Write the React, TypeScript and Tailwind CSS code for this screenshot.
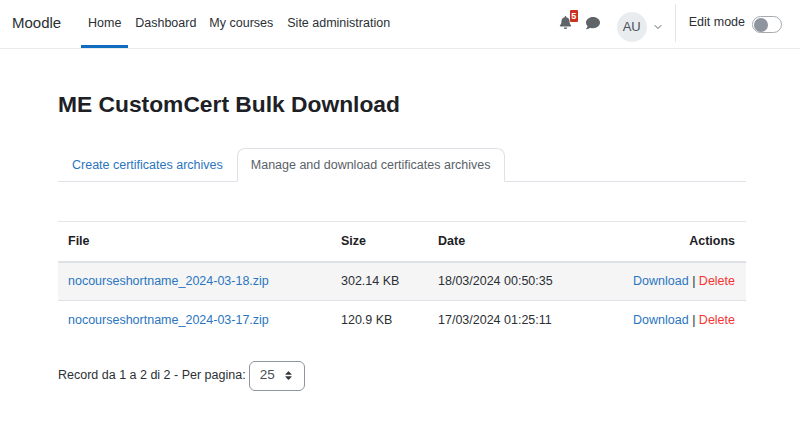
import { FaBell, FaComment, FaSort } from "react-icons/fa";
import { ChevronDown } from "lucide-react";

const rows = [
  { file: "nocourseshortname_2024-03-18.zip", size: "302.14 KB", date: "18/03/2024 00:50:35", shaded: true },
  { file: "nocourseshortname_2024-03-17.zip", size: "120.9 KB", date: "17/03/2024 01:25:11", shaded: false },
];

function Navbar() {
  return (
    <nav className="flex h-[49px] items-stretch border-b border-[#e9ebed] bg-white pl-3 pr-[18px]">
      <span className="mt-[13px] text-[15px] leading-[20px] text-[#2b3035]">Moodle</span>
      <ul className="ml-[20px] flex text-[12.5px] text-[#2b3035]">
        <li className="w-[47px] border-b-[3px] border-[#0f6cbf] pt-[14px] text-center leading-[18px]">Home</li>
        <li className="ml-[7px] pt-[14px] leading-[18px]">Dashboard</li>
        <li className="ml-[13px] pt-[14px] leading-[18px]">My courses</li>
        <li className="ml-[14px] pt-[14px] leading-[18px]">Site administration</li>
      </ul>
      <div className="ml-auto flex items-start">
        <div className="relative mt-[16px] text-[#5f6468]">
          <FaBell className="h-[13px] w-[13px]" />
          <span className="absolute left-[11px] top-[-6px] h-[12px] w-[8px] rounded-[1px] bg-[#ca3120] text-center text-[9px] font-bold leading-[12px] text-white">
            5
          </span>
        </div>
        <FaComment className="ml-[14px] mt-[16px] h-[14px] w-[14px] text-[#5f6468]" />
        <div className="ml-[17px] mt-[12px] flex h-[30px] w-[30px] items-center justify-center rounded-full bg-[#e9ecef] text-[13px] text-[#495057]">
          AU
        </div>
        <ChevronDown className="ml-[5px] mt-[21px] h-[12px] w-[12px] text-[#5f6468]" strokeWidth={2} />
        <div className="ml-[11px] mt-1 h-[38px] w-px bg-[#e3e5e7]" />
        <span className="ml-[13px] mt-[13px] text-[12.5px] leading-[18px] text-[#2b3035]">Edit mode</span>
        <div className="ml-[7px] mt-[16px] flex h-[17px] w-[30px] items-center rounded-full border border-[#a5aab1] bg-white pl-px">
          <div className="h-[14px] w-[14px] rounded-full bg-[#8f959e]" />
        </div>
      </div>
    </nav>
  );
}

export default function App() {
  return (
    <div className="h-[424px] w-[800px] overflow-hidden bg-white font-['Liberation_Sans',Arial,sans-serif] text-[#2b3035]">
      <Navbar />
      <main className="pl-[58px] pr-[54px] pt-[40px]">
        <h1 className="text-[22.8px] font-bold leading-[30px] text-[#1d2125]">ME CustomCert Bulk Download</h1>

        <div className="mt-[29px] flex h-[34px] border-b border-[#dee2e6] text-[12.5px]">
          <a className="px-[14px] pt-[7px] leading-[20px] text-[#2a75c0]">Create certificates archives</a>
          <a className="h-[34px] rounded-t-[8px] border border-b-white border-[#dee2e6] bg-white px-[13px] pt-[6px] leading-[20px] text-[#5a6168]">
            Manage and download certificates archives
          </a>
        </div>

        <table className="mt-[39px] w-[688px] table-fixed border-collapse text-[12.5px]">
          <thead>
            <tr className="h-[40px] border-t border-b-2 border-t-[#e3e5e7] border-b-[#dee2e6] font-bold text-[#1d2125]">
              <th className="w-[273px] pl-[10px] text-left">File</th>
              <th className="w-[97px] pl-[10px] text-left">Size</th>
              <th className="pl-[10px] text-left">Date</th>
              <th className="w-[170px] pr-[11px] text-right">Actions</th>
            </tr>
          </thead>
          <tbody>
            {rows.map((row) => (
              <tr key={row.file} className={row.shaded ? "h-[39px] border-b border-[#dee2e6] bg-[#f5f5f5]" : "h-[39px]"}>
                <td className="pl-[10px] text-[#2a75c0]">{row.file}</td>
                <td className="pl-[10px]">{row.size}</td>
                <td className="pl-[10px]">{row.date}</td>
                <td className="pr-[11px] text-right">
                  <a className="text-[#2a75c0]">Download</a> | <a className="text-[#f53333]">Delete</a>
                </td>
              </tr>
            ))}
          </tbody>
        </table>

        <div className="mt-[21px] flex items-center text-[12.5px]">
          <span>Record da 1 a 2 di 2 - Per pagina:</span>
          <div className="ml-[3px] flex h-[30px] w-[56px] items-center justify-between rounded-[6px] border border-[#8f959e] pl-[10px] pr-[10px] text-[#495057]">
            <span className="text-[13.5px]">25</span>
            <FaSort className="h-[11px] w-[11px] text-[#343a40]" />
          </div>
        </div>
      </main>
    </div>
  );
}
